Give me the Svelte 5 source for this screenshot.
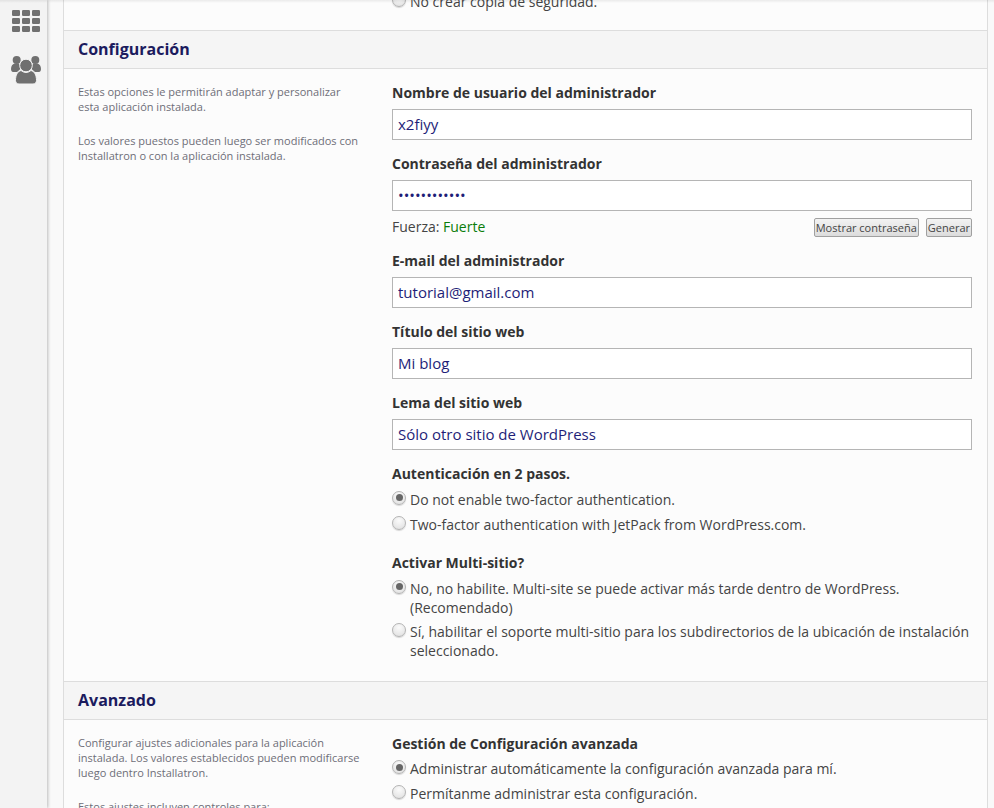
<script>
  const twoFactor = [
    { label: 'Do not enable two-factor authentication.', on: true },
    { label: 'Two-factor authentication with JetPack from WordPress.com.', on: false },
  ];
  const multisite = [
    { label: 'No, no habilite. Multi-site se puede activar más tarde dentro de WordPress. (Recomendado)', on: true },
    { label: 'Sí, habilitar el soporte multi-sitio para los subdirectorios de la ubicación de instalación seleccionado.', on: false },
  ];
  const advanced = [
    { label: 'Administrar automáticamente la configuración avanzada para mí.', on: true },
    { label: 'Permítanme administrar esta configuración.', on: false },
  ];
</script>

{#snippet radios(items)}
  {#each items as item}
    <label class="radio">
      <span class="dot" class:on={item.on}></span>
      <span>{item.label}</span>
    </label>
  {/each}
{/snippet}

<div class="page">
  <nav class="rail">
    <svg class="ico-grid" viewBox="0 0 28 22" width="28" height="22">
      {#each [0, 8, 16] as y}
        {#each [0, 10, 20] as x}
          <rect {x} {y} width="8" height="6" rx="1.2" fill="#707070" />
        {/each}
      {/each}
    </svg>
    <svg class="ico-users" viewBox="0 0 30 28" width="30" height="28">
      <circle cx="5.700" cy="4" r="4" fill="#707070" />
      <circle cx="24.300" cy="4" r="4" fill="#707070" />
      <path d="M0 13c0-3 1.500-5 3.500-5.500h4.500l2 5-4 3.500H2c-1 0-2-1-2-3zM30 13c0-3-1.500-5-3.500-5.500H22l-2 5 4 3.500h4c1 0 2-1 2-3z" fill="#707070" />
      <circle cx="15" cy="9.500" r="6.300" fill="#707070" stroke="#f3f3f3" stroke-width="1" />
      <path d="M4.500 24.500C4.500 19 6.500 15.500 10 14.500Q15 18.500 20 14.500C23.500 15.500 25.500 19 25.500 24.500C25.500 26.800 24 28 22 28H8C6 28 4.500 26.800 4.500 24.500z" fill="#707070" stroke="#f3f3f3" stroke-width="1" />
    </svg>
  </nav>

  <main class="panel">
    <div class="backup-tail">
      <label class="radio"><span class="dot"></span><span>No crear copia de seguridad.</span></label>
    </div>

    <h2 class="section-head">Configuración</h2>
    <section class="section">
      <aside class="help">
        <p>Estas opciones le permitirán adaptar y personalizar esta aplicación instalada.</p>
        <p>Los valores puestos pueden luego ser modificados con Installatron o con la aplicación instalada.</p>
      </aside>
      <div class="fields">
        <div class="field">
          <div class="label">Nombre de usuario del administrador</div>
          <input type="text" value="x2fiyy" />
        </div>
        <div class="field">
          <div class="label">Contraseña del administrador</div>
          <input type="password" value="abcdefghijkl" />
          <div class="pw-row">
            <span>Fuerza: <span class="strong">Fuerte</span></span>
            <span class="pw-btns">
              <button>Mostrar contraseña</button>
              <button>Generar</button>
            </span>
          </div>
        </div>
        <div class="field">
          <div class="label">E-mail del administrador</div>
          <input type="text" value="tutorial@gmail.com" />
        </div>
        <div class="field">
          <div class="label">Título del sitio web</div>
          <input type="text" value="Mi blog" />
        </div>
        <div class="field">
          <div class="label">Lema del sitio web</div>
          <input type="text" value="Sólo otro sitio de WordPress" />
        </div>
        <div class="field group two-factor">
          <div class="label">Autenticación en 2 pasos.</div>
          {@render radios(twoFactor)}
        </div>
        <div class="field group">
          <div class="label">Activar Multi-sitio?</div>
          {@render radios(multisite)}
        </div>
      </div>
    </section>

    <h2 class="section-head">Avanzado</h2>
    <section class="section">
      <aside class="help">
        <p>Configurar ajustes adicionales para la aplicación instalada. Los valores establecidos pueden modificarse luego dentro Installatron.</p>
        <p>Estos ajustes incluyen controles para:</p>
      </aside>
      <div class="fields">
        <div class="field group">
          <div class="label">Gestión de Configuración avanzada</div>
          {@render radios(advanced)}
        </div>
      </div>
    </section>
  </main>
</div>

<style>
  :global(body) {
    margin: 0;
    background: #f9f9f9;
    font-family: "Open Sans", sans-serif;
    color: #333;
  }

  .page {
    display: flex;
    height: 808px;
    overflow: hidden;
    position: relative;
  }
  /* shadow from the fixed header scrolled out of view */
  .page::after {
    content: "";
    position: absolute;
    left: 0;
    right: 0;
    top: 0;
    height: 3px;
    background: linear-gradient(rgba(0, 0, 0, 0.07), rgba(0, 0, 0, 0));
  }

  /* left icon rail */
  .rail {
    width: 47px;
    flex-shrink: 0;
    background: #f3f3f3;
    box-shadow: 1px 0 3px rgba(0, 0, 0, 0.25);
    display: flex;
    flex-direction: column;
    padding: 10px 0 0 12px;
    gap: 24px;
    box-sizing: border-box;
  }
  .ico-users { margin-left: -1px; }

  .panel {
    width: 925px;
    margin-left: 16px;
    height: 900px;
    border-left: 1px solid #ddd;
    border-right: 1px solid #ddd;
    background: #fcfcfc;
    box-sizing: border-box;
    font-size: 14px;
  }

  .backup-tail {
    height: 38px;
    margin-top: -8px;
    padding-left: 328px;
  }
  .backup-tail .radio { margin: 0; }

  .section-head {
    margin: 0;
    height: 39px;
    box-sizing: border-box;
    background: #f5f5f5;
    border-top: 1px solid #ddd;
    border-bottom: 1px solid #ddd;
    padding-left: 14px;
    font-size: 16px;
    font-weight: 700;
    line-height: 36px;
    color: #1b1b5e;
  }

  .section {
    display: flex;
    padding: 14px 15px 1.5px 14px;
  }

  .help {
    width: 314px;
    flex-shrink: 0;
    font-size: 11px;
    line-height: 15px;
    color: #6e6e78;
    padding-top: 1px;
  }
  .help p {
    margin: 0 0 19px;
    width: 285px;
  }

  .fields {
    flex: 1;
    min-width: 0;
  }
  .field { margin-bottom: 14px; }
  .label {
    font-weight: 700;
    font-size: 14px;
    line-height: 20px;
    color: #333;
    margin-bottom: 6px;
  }

  input {
    display: block;
    width: 100%;
    height: 31px;
    box-sizing: border-box;
    border: 1px solid #b5b5b5;
    background: #fff;
    padding: 0 5px 2px;
    font: 15px "Open Sans", sans-serif;
    color: #1e1e78;
    border-radius: 0;
    outline: none;
  }

  .pw-row {
    display: flex;
    justify-content: space-between;
    align-items: center;
    margin-top: 5px;
    margin-bottom: 2px;
    height: 21px;
    color: #444;
    font-size: 14px;
  }
  .strong { color: #0a7d0a; }
  .pw-btns {
    display: flex;
    gap: 7px;
    align-items: center;
    padding-top: 2px;
  }
  button {
    height: 19px;
    padding: 0 1px;
    font: 11px "Open Sans", sans-serif;
    color: #444;
    background: linear-gradient(#f3f3f3, #dcdcdc);
    border: 1px solid #a0a0a0;
    border-radius: 2px;
  }

  .radio {
    display: flex;
    gap: 4px;
    font-size: 14px;
    line-height: 19px;
    color: #444;
    margin-top: 5.5px;
    width: 580px;
  }
  .group .label { margin-bottom: 3.5px; }
  .group { margin-bottom: 19px; }
  .group.two-factor { margin-bottom: 19.5px; }
  .two-factor .radio + .radio { margin-top: 6px; }
  .dot {
    width: 14px;
    height: 14px;
    flex-shrink: 0;
    margin-top: 1px;
    border-radius: 50%;
    box-sizing: border-box;
    border: 1px solid #b4b4b4;
    background: radial-gradient(circle at 50% 30%, #fbfbfb, #dedede);
    box-shadow: 0 1px 1px rgba(0, 0, 0, 0.15);
    position: relative;
  }
  .dot.on::after {
    content: "";
    position: absolute;
    left: 2.5px;
    top: 2.5px;
    width: 7px;
    height: 7px;
    border-radius: 50%;
    background: #666;
  }
</style>
